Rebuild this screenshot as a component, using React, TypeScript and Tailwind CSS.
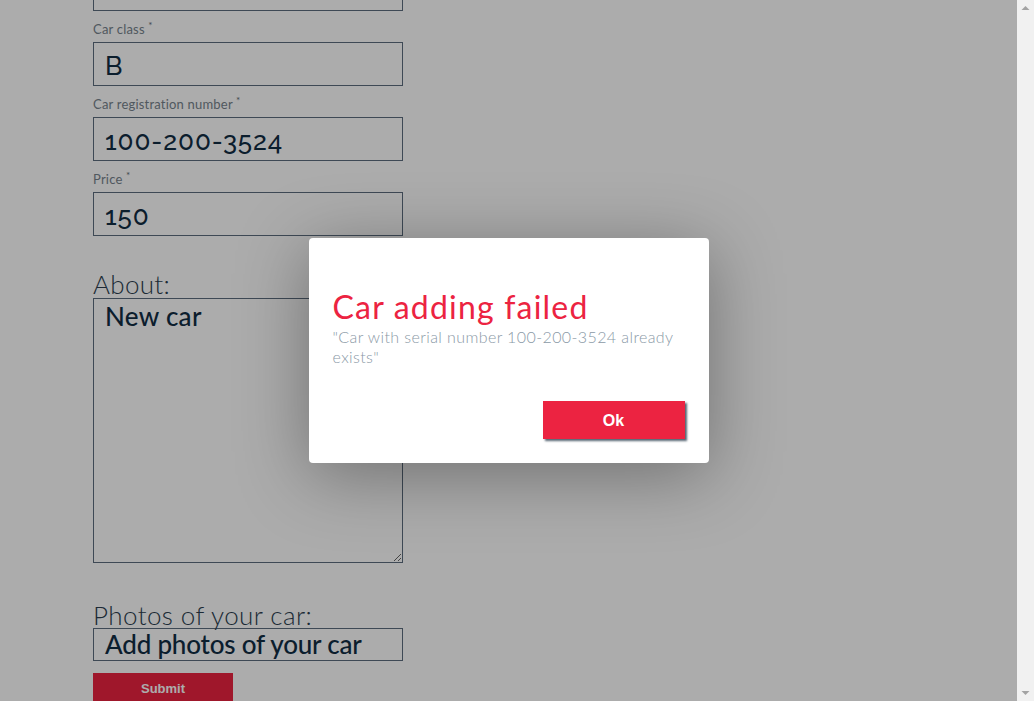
import React from 'react';

const fieldFont = { fontFamily: 'Raleway, Lato, "Open Sans", sans-serif' };

// Form field with a label and a single-line input
const Field: React.FC<{ label: string; value: string }> = ({ label, value }) => (
  <div>
    <div className="pt-[8px] pb-[3px] text-[13px] leading-[20px] tracking-[0.2px] text-[#77838d]">
      {label} <sup className="text-[10px] text-[#5f6b75]">*</sup>
    </div>
    <input
      readOnly
      value={value}
      className="block w-[310px] h-[44px] border border-[#5d6d7e] bg-transparent px-[11px] pt-[4px] text-[26px] font-medium tracking-[0.9px] text-[#112d44] outline-none"
      style={fieldFont}
    />
  </div>
);

const App: React.FC = () => {
  return (
    <div className="flex h-[701px] w-full overflow-hidden" style={{ fontFamily: 'Lato, "Open Sans", sans-serif' }}>
      <div className="relative flex-1 overflow-hidden bg-white">
        {/* Form (scrolled down) */}
        <div className="pl-[93px] mt-[-33px]">
          <input
            readOnly
            value="Sedan"
            className="block w-[310px] h-[44px] border border-[#5d6d7e] bg-transparent px-[11px] text-[26px] font-medium text-[#112d44] outline-none"
          />
          <Field label="Car class" value="B" />
          <Field label="Car registration number" value="100-200-3524" />
          <Field label="Price" value="150" />

          <h2 className="mt-[34px] text-[26px] font-light leading-[28px] tracking-[0.3px] text-[#2c3e50]">About:</h2>
          <textarea
            readOnly
            value="New car"
            className="block w-[310px] h-[265px] border border-[#5d6d7e] bg-transparent px-[11px] py-0 text-[26px] font-medium leading-[34px] tracking-[0.3px] text-[#112d44] outline-none"
          />

          <h2 className="mt-[40px] text-[26px] font-light leading-[25px] tracking-[0.4px] text-[#2c3e50]">Photos of your car:</h2>
          <div className="w-[310px] h-[33px] border border-[#5d6d7e] px-[11px] text-[26px] font-medium leading-[31px] tracking-[-0.2px] text-[#112d44]">
            Add photos of your car
          </div>

          <button
            className="mt-[12px] w-[140px] h-[32px] bg-[#ec2341] text-[13px] font-bold text-white"
            style={{ fontFamily: '"Liberation Sans", Arial, sans-serif' }}
          >
            Submit
          </button>
        </div>

        {/* Dim overlay + modal */}
        <div className="absolute inset-0 flex items-center justify-center bg-black/[0.325]">
          <div className="w-[400px] rounded-[4px] bg-white px-6 pt-[51px] pb-6 shadow-[0_12px_70px_rgba(0,0,0,0.35)]">
            <h1 className="text-[32px] leading-[36px] tracking-[1.2px] text-[#ec2341]">Car adding failed</h1>
            <p className="mt-[2px] text-[16px] font-light leading-[20px] tracking-[0.4px] text-[#8a99a6]">
              "Car with serial number 100-200-3524 already exists"
            </p>
            <div className="mt-[34px] flex justify-end">
              <button
                className="w-[142px] h-[38px] bg-[#ec2341] pt-[2px] text-[16px] font-bold text-white shadow-[2px_2px_2px_rgba(44,62,80,0.8)]"
                style={{ fontFamily: '"Liberation Sans", Arial, sans-serif' }}
              >
                Ok
              </button>
            </div>
          </div>
        </div>
      </div>

      {/* Scrollbar */}
      <div className="flex w-[17px] flex-col justify-between bg-[#f1f1f1] py-[5px]">
        <svg width="17" height="6" viewBox="0 0 17 6">
          <path d="M4.5 5 L8.5 1 L12.5 5 Z" fill="#a3a3a3" />
        </svg>
        <svg width="17" height="6" viewBox="0 0 17 6">
          <path d="M4.5 1 L8.5 5 L12.5 1 Z" fill="#a3a3a3" />
        </svg>
      </div>
    </div>
  );
};

export default App;
